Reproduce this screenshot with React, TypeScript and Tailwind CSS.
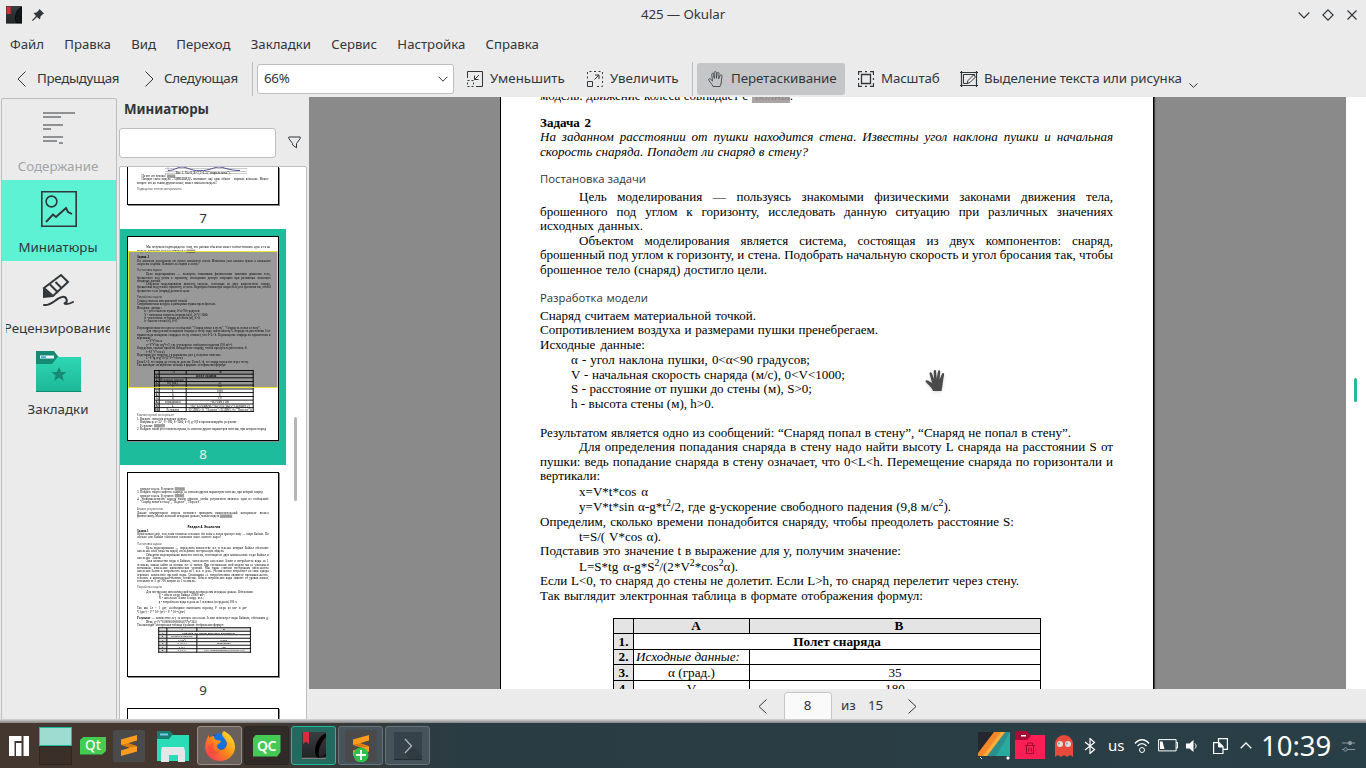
import type { ReactNode } from "react";

type Row = { b: number; x?: number; r?: number; t: ReactNode; c?: string };

const SANS = "font-['Noto_Sans',sans-serif]";
const PAGE_SCALE = 0.2327;

/* One typeset line: b = baseline, x..r = horizontal extent inside the sheet. */
function Lines({ rows, start = 0 }: { rows: Row[]; start?: number }) {
  return (
    <>
      {rows.map((row, i) => {
        const prev = i === 0 ? start : rows[i - 1].b + 3;
        const x = row.x ?? 39;
        return (
          <div
            key={i}
            className={`h-[14px] whitespace-nowrap text-[13.05px] leading-[14px] ${row.r ? "[text-align-last:justify]" : ""} ${row.c ?? ""}`}
            style={{ marginTop: row.b - 11 - prev, marginLeft: x, width: row.r ? row.r - x : undefined }}
          >
            {row.t}
          </div>
        );
      })}
    </>
  );
}

const Blank = ({ children }: { children: ReactNode }) => (
  <span className="bg-[#aaa5a5] text-[#8b8686]">{children}</span>
);
const HEAD = "font-['Open_Sans',sans-serif] text-[11.3px]! text-[#333]";

const page8: Row[] = [
  { b: 50, x: 78, r: 612, t: "Мы получили подтверждение тому, что разным объектам может соответствовать одна и та же" },
  { b: 67, r: 292, t: <>модель: движение колеса совпадает с <Blank>&nbsp;волны</Blank>.</> },
  { b: 94, r: 90, t: "Задача 2", c: "font-bold" },
  { b: 108, r: 612, t: "На заданном расстоянии от пушки находится стена. Известны угол наклона пушки и начальная", c: "italic" },
  { b: 123, r: 307, t: "скорость снаряда. Попадет ли снаряд в стену?", c: "italic" },
  { b: 150, r: 144, t: "Постановка задачи", c: HEAD },
  { b: 168, x: 78, r: 612, t: "Цель моделирования — пользуясь знакомыми физическими законами движения тела," },
  { b: 183, r: 612, t: "брошенного под углом к горизонту, исследовать данную ситуацию при различных значениях" },
  { b: 197, r: 142, t: "исходных данных." },
  { b: 212, x: 78, r: 612, t: "Объектом моделирования является система, состоящая из двух компонентов: снаряд," },
  { b: 226, r: 612, t: "брошенный под углом к горизонту, и стена. Подобрать начальную скорость и угол бросания так, чтобы", c: "tracking-[-0.03px]" },
  { b: 241, r: 266, t: "брошенное тело (снаряд) достигло цели." },
  { b: 269, r: 147, t: "Разработка модели", c: HEAD },
  { b: 287, r: 255, t: "Снаряд считаем материальной точкой." },
  { b: 301, r: 377, t: "Сопротивлением воздуха и размерами пушки пренебрегаем." },
  { b: 316, r: 144, t: "Исходные данные:" },
  { b: 331, x: 70, r: 309, t: "α - угол наклона пушки, 0<α<90 градусов;" },
  { b: 346, x: 70, r: 344, t: "V - начальная скорость снаряда (м/с), 0<V<1000;" },
  { b: 360, x: 70, r: 311, t: "S - расстояние от пушки до стены (м), S>0;" },
  { b: 375, x: 70, r: 213, t: "h - высота стены (м), h>0." },
  { b: 404, r: 570, t: "Результатом является одно из сообщений: “Снаряд попал в стену”, “Снаряд не попал в стену”." },
  { b: 418, x: 78, r: 612, t: "Для определения попадания снаряда в стену надо найти высоту L снаряда на расстоянии S от" },
  { b: 433, r: 612, t: "пушки: ведь попадание снаряда в стену означает, что 0<L<h. Перемещение снаряда по горизонтали и" },
  { b: 447, r: 99, t: "вертикали:" },
  { b: 463, x: 78, r: 147, t: "x=V*t*cos α" },
  { b: 478, x: 78, r: 450, t: <>y=V*t*sin α-g*t<sup>2</sup>/2, где g-ускорение свободного падения (9,8 м/с<sup>2</sup>).</> },
  { b: 493, r: 513, t: "Определим, сколько времени понадобится снаряду, чтобы преодолеть расстояние S:" },
  { b: 508, x: 78, r: 160, t: "t=S/( V*cos α)." },
  { b: 522, r: 400, t: "Подставив это значение t в выражение для y, получим значение:" },
  { b: 538, x: 78, r: 237, t: <>L=S*tg α-g*S<sup>2</sup>/(2*V<sup>2</sup>*cos<sup>2</sup>α).</> },
  { b: 552, r: 518, t: "Если L<0, то снаряд до стены не долетит. Если L>h, то снаряд перелетит через стену." },
  { b: 567, r: 422, t: "Так выглядит электронная таблица в формате отображения формул:" },
];

const page8tail: Row[] = [
  { b: 788, r: 183, t: "Компьютерный эксперимент", c: HEAD },
  { b: 805, r: 240, t: "1. Введите значения исходных данных" },
  { b: 819, x: 52, r: 462, t: "Например: α=35°, V=180, S=1000, h=8, g=9,8 и проанализируйте результат" },
  { b: 834, x: 52, r: 150, t: <>Результат: <Blank>попал!!!</Blank></> },
  { b: 849, r: 580, t: "2. Найдите такой угол наклона пушки, не изменяя других параметров системы, при котором снаряд" },
];

const table8: [string, string, string][] = [
  ["2.", "Исходные данные:", ""],
  ["3.", "α (град.)", "35"],
  ["4.", "V", "180"],
  ["5.", "S", "1000"],
  ["6.", "h", "8"],
  ["7.", "g", "9,8"],
  ["8.", "α (радианы)", "=B3*ПИ()/180"],
  ["9.", "L", "=B5*TAN(B8)-B7*B5^2/(2*B4^2*COS(B8)^2)"],
  ["10.", "Результат", "=ЕСЛИ(L<0; “Недолет”; ЕСЛИ(L>h; “Перелет”))"],
];

const page9: Row[] = [
  { b: 73, x: 52, r: 203, t: <>попадет в цель. Результат: <Blank>35 град.</Blank></> },
  { b: 87, r: 560, t: "3. Найдите такую скорость снаряда, не изменяя других параметров системы, при которой снаряд" },
  { b: 102, x: 52, r: 203, t: <>попадет в цель. Результат: <Blank>180 м/с</Blank></> },
  { b: 116, r: 604, t: "4. Усовершенствуйте модель таким образом, чтобы результатом являлось одно из сообщений:" },
  { b: 130, x: 52, r: 312, t: "“Снаряд попал в стену”, “Недолет”, “Перелет”." },
  { b: 157, r: 148, t: "Анализ результатов", c: HEAD },
  { b: 176, r: 604, t: "Данная компьютерная модель позволяет проводить вычислительный эксперимент взамен" },
  { b: 190, r: 440, t: <>физическому. Меняя значения исходных данных, можно видеть <Blank>результат</Blank></> },
  { b: 236, x: 256, r: 392, t: "Раздел 4. Экология", c: "font-bold font-['Open_Sans',sans-serif] text-[14px]!" },
  { b: 252, r: 87, t: "Задача 1", c: "font-bold" },
  { b: 266, r: 604, t: "Представим себе, что люди планеты остались без воды и пьют пресную воду — озера Байкал. На", c: "italic" },
  { b: 281, r: 400, t: "сколько лет Байкал обеспечит население всего земного шара?", c: "italic" },
  { b: 308, r: 144, t: "Постановка задачи", c: HEAD },
  { b: 326, x: 78, r: 604, t: "Цель моделирования — определить количество лет, в течение которых Байкал обеспечит" },
  { b: 340, r: 414, t: "население всей планеты водой, исследовать построенную модель." },
  { b: 355, x: 78, r: 604, t: "Объектом моделирования является система, состоящая из двух компонентов: озеро Байкал и" },
  { b: 369, r: 142, t: "население Земли." },
  { b: 384, x: 78, r: 604, t: "Зная количество воды в Байкале, численность населения Земли и потребность воды на 1" },
  { b: 398, r: 604, t: "человека, можно найти на сколько лет её хватит. При составлении этой модели мы не учитываем" },
  { b: 412, r: 604, t: "возможные изменения климатических условий. Мы также считаем постоянным численность" },
  { b: 427, r: 604, t: "населения Земли и потребность воды на 1 чел. в день. (Человечество потребляет на свои нужды" },
  { b: 441, r: 604, t: "огромное количество пресной воды. Основными её потребителями являются промышленность," },
  { b: 456, r: 604, t: "сельское и коммунально-бытовое хозяйство. Объем потребления воды зависит от уровня жизни," },
  { b: 470, r: 290, t: "составляя от 3 до 700 литров на 1 человека." },
  { b: 496, r: 147, t: "Разработка модели", c: HEAD },
  { b: 514, x: 78, r: 535, t: "Для построения математической модели определим исходные данные. Обозначим:" },
  { b: 528, x: 132, r: 330, t: "V - объем озера Байкал 23000 км³;" },
  { b: 543, x: 132, r: 325, t: "N - население Земли 6 млрд. чел.;" },
  { b: 557, x: 132, r: 470, t: "p - потребление воды в день на 1 человека (в среднем) 300 л." },
  { b: 586, r: 510, t: "Так как 1л = 1 дм³, необходимо выполнить перевод V озера из км³ в дм³" },
  { b: 600, r: 245, t: "V (дм³) = V * 10³ (м³) = V * 10¹² (дм³)" },
  { b: 629, r: 604, t: <><b>Результат</b> — количество лет, за которое население Земли использует воды Байкала, обозначим g.</> },
  { b: 643, x: 78, r: 290, t: "Итак, g=(V*1000000000000)/(N*p*365)" },
  { b: 656, r: 410, t: "Так выглядит электронная таблица в режиме отображения формул:" },
];

function Table8({ heavy }: { heavy: boolean }) {
  const cell = `${heavy ? "border-4" : "border"} border-black p-0 whitespace-nowrap overflow-hidden`;
  return (
    <table className="mt-[15px] ml-[112px] w-[428px] table-fixed border-collapse text-center text-[13.2px] leading-[12px]">
      <colgroup>
        <col className="w-[20px]" />
        <col className="w-[116px]" />
        <col />
      </colgroup>
      <tbody>
        <tr className="h-[15px] bg-[#e4e4e4] font-bold">
          <td className={cell} />
          <td className={cell}><span className="pl-[9px]">A</span></td>
          <td className={cell}><span className="pl-[8px]">B</span></td>
        </tr>
        <tr className="h-[16px] font-bold">
          <td className={`${cell} bg-[#e4e4e4]`}>1.</td>
          <td className={cell} colSpan={2}>Полет снаряда</td>
        </tr>
        {table8.map(([n, a, b], i) => (
          <tr key={n} className={i === 0 ? "h-[15px]" : i % 2 ? "h-[16px]" : "h-[17px]"}>
            <td className={`${cell} bg-[#e4e4e4] font-bold`}>{n}</td>
            <td className={`${cell} ${i === 0 ? "text-left italic" : ""}`}>{i === 0 ? <span className="pl-[2px]">{a}</span> : a}</td>
            <td className={cell}>{b}</td>
          </tr>
        ))}
      </tbody>
    </table>
  );
}

const sheet = "flow-root h-[901px] w-[652px] bg-white font-['Liberation_Serif',serif] text-black";

function Sheet8({ heavy = false }: { heavy?: boolean }) {
  return (
    <div className={sheet}>
      <Lines rows={page8} />
      <div className="h-[200px] overflow-hidden"><Table8 heavy={heavy} /></div>
      <Lines rows={page8tail} start={770} />
    </div>
  );
}

function Sheet9() {
  const rows = [["1.", "Сколько лет можно пить воду из Байкала", ""], ["2.", "Исходные данные:", ""], ["3.", "V (км³)", "23000"], ["4.", "N (чел.)", "6000000000"], ["5.", "p (л.)", "300"], ["6.", "g (лет)", "=(B3*1000000000000)/(B4*B5*365)"]];
  const cell = "border-4 border-black p-0 whitespace-nowrap overflow-hidden";
  return (
    <div className={sheet}>
      <Lines rows={page9} />
      <table className="mt-[4px] ml-[130px] w-[398px] table-fixed border-collapse text-center text-[12px] leading-[11px]">
        <colgroup><col className="w-[35px]" /><col className="w-[129px]" /><col /></colgroup>
        <tbody>
          <tr className="bg-[#e4e4e4] font-bold"><td className={cell} /><td className={cell}>A</td><td className={cell}>B</td></tr>
          {rows.map(([n, a, b], i) => (
            <tr key={n}>
              <td className={`${cell} bg-[#e4e4e4] font-bold`}>{n}</td>
              {i === 0 ? <td className={`${cell} font-bold`} colSpan={2}>{a}</td> : <><td className={`${cell} ${i === 1 ? "italic" : ""}`}>{a}</td><td className={cell}>{b}</td></>}
            </tr>
          ))}
        </tbody>
      </table>
    </div>
  );
}

function Mini({ sy = PAGE_SCALE, children }: { sy?: number; children: ReactNode }) {
  return (
    <div className="h-[205px] w-[152px] shrink-0 overflow-hidden border border-black bg-white shadow-[1px_1px_0_#8a8a8a]">
      <div className="origin-top-left" style={{ transform: `scale(${PAGE_SCALE}, ${sy})`, width: 653 }}>{children}</div>
    </div>
  );
}

function Thumbnails() {
  return (
    <div className="flex h-[555px] w-[188px] overflow-hidden rounded-[2px] border border-[#bcbebf] bg-white">
      <div className={`flex w-[166px] flex-col text-[13.33px] text-[#31363b] ${SANS}`}>
        <div className="flex h-[62px] shrink-0 flex-col items-center">
          <div className="h-[38px] w-[152px] overflow-hidden border border-t-0 border-black shadow-[1px_1px_0_#8a8a8a]">
            <svg width="150" height="7" className="block">
              <path d="M37 1.5h82M37 4.5h82M37 6.5h82M40 0v7" stroke="#b5b5b5" strokeWidth=".7" fill="none" />
              <path d="M40 3.5c7 0 9-3.5 14-3.5s8 3.7 18 3.7S86 0 91 0s9 3.5 21 3.5" stroke="#4c4a8f" fill="none" />
            </svg>
            <div className="w-[653px] origin-top-left font-['Liberation_Serif',serif] text-black" style={{ transform: `scale(${PAGE_SCALE})` }}>
              <Lines
                start={0}
                rows={[
                  { b: 8, x: 205, r: 440, t: "Рис. 1. Vк=0, R=1, l=1.5 (“спираль козы”)." },
                  { b: 24, x: 58, r: 200, t: <>На что это похоже? <Blank>волны</Blank></> },
                  { b: 37, x: 58, r: 604, t: "Находит связь модель – ЦИКЛОИДА описывает ещё один объект – морское волнение. Может" },
                  { b: 51, r: 375, t: "вопрос: что же таким другим может, может заменить модель?" },
                  { b: 80, r: 230, t: "Подведение итогов эксперимента", c: HEAD },
                ]}
              />
            </div>
          </div>
          <div className="mt-[4px] leading-[18px]">7</div>
        </div>
        <div className="flex h-[236px] shrink-0 flex-col items-center bg-[#1dbc9c] pt-[7px] text-[#eff0f1]">
          <div className="relative">
            <Mini sy={0.2275}><Sheet8 heavy /></Mini>
            <div className="absolute top-[15px] left-[1px] h-[137px] w-[150px] border border-[#e9e92a] bg-black/40" />
          </div>
          <div className="mt-[4px] leading-[18px]">8</div>
        </div>
        <div className="flex h-[236px] shrink-0 flex-col items-center pt-[7px]">
          <Mini><Sheet9 /></Mini>
          <div className="mt-[4px] leading-[18px]">9</div>
        </div>
        <div className="flex shrink-0 flex-col items-center pt-[7px]"><Mini>{null}</Mini></div>
      </div>
      <div className="mt-[250px] ml-[8px] h-[84px] w-[3px] rounded-full bg-[#b4b5b6]" />
    </div>
  );
}

function SideItem({ label, icon, cls = "" }: { label: string; icon: ReactNode; cls?: string }) {
  return (
    <div className={`flex h-[81px] flex-col items-center overflow-hidden pr-[6px] pl-[4px] ${cls}`}>
      <div className="flex h-[58px] shrink-0 items-center pl-[2px]">{icon}</div>
      <div className="flex w-[104px] justify-center overflow-hidden leading-[18px] whitespace-nowrap">{label}</div>
    </div>
  );
}

function Sidebar() {
  return (
    <div className="ml-px h-[624px] w-[116px] rounded-[2px] border border-[#bcbebf] text-[13.33px]">
      <SideItem
        label="Содержание"
        cls="text-[#a2a4a5]"
        icon={<svg width="32" height="34" className="-mt-[3px]" fill="#909192"><path d="M0 2h32v2H0zM0 6h18v2H0zM0 14h20v2H0zM0 18h8v2H0zM0 26h20v2H0zM0 30h14v2H0zM16 32h4v2h-4z" /></svg>}
      />
      <SideItem
        label="Миниатюры"
        cls="bg-[#5ef2d5]"
        icon={<svg width="36" height="36" fill="none" stroke="#31363b" strokeWidth="1.6"><path d="M.8.8h34.4v34.4H.8z" /><circle cx="10.5" cy="10.5" r="5.4" /><path d="M5 31l7-7.5 3 2.5 5-4.500 5-4.500 2 4 4 2" strokeWidth="1.9" /></svg>}
      />
      <SideItem
        label="Рецензирование"
        icon={<svg width="34" height="34" fill="none" stroke="#31363b" strokeWidth="2"><path d="M2 15L19 2l7 7L11 23z" /><path d="M8 11.500l8 8M13.500 9l6 6" /><path d="M1 25V15l10 9z" fill="#31363b" stroke="none" /><path d="M2 32c8 1 12-7 18-8 5-1 6 5 3 6-2 1 3 2 8-1" strokeLinecap="round" /></svg>}
      />
      <SideItem
        label="Закладки"
        icon={
          <svg width="46" height="44" className="mt-[2px]">
            <defs><linearGradient id="fold" x2="0" y2="1"><stop stopColor="#30dcb8" /><stop offset="1" stopColor="#1db797" /></linearGradient></defs>
            <path d="M0 2h18l5 5h22v35H0z" fill="url(#fold)" />
            <path d="M0 1h18l4 5.500-6 7.500H0z" fill="#168a73" />
            <path d="M4 5.500h14v3H4z" fill="#f2f9ff" /><path d="M5 6.200h5v1.800H5z" fill="#3daee9" />
            <path d="M0 41.500h45.500" stroke="#138a70" />
            <path d="M23 17l2.200 5h5.300l-4.200 3.500 1.600 5.500-4.900-3.200L18.100 31l1.600-5.500L15.500 22h5.300z" fill="#168a73" />
          </svg>
        }
      />
    </div>
  );
}

const I = ({ w = 16, h = 16, cls = "", children }: { w?: number; h?: number; cls?: string; children: ReactNode }) => (
  <svg width={w} height={h} viewBox={`0 0 ${w} ${h}`} className={`shrink-0 ${cls}`} fill="none" stroke="#31363b">{children}</svg>
);

function Toolbar() {
  return (
    <div className="flex h-[36px] items-center pb-[1px] text-[13.33px] whitespace-nowrap">
      <I w={9} h={16} cls="ml-[17px]"><path d="M8.500.5L1 8l7.500 7.500" /></I>
      <span className="ml-[11px] w-[108px] tracking-[-0.3px]">Предыдущая</span>
      <I w={9} h={16} cls="-ml-[0px]"><path d="M.5.5L8 8 .5 15.500" /></I>
      <span className="ml-[10px] w-[88px] tracking-[-0.25px]">Следующая</span>
      <div className="mt-[1px] h-[34px] w-px bg-[#bcbebf]" />
      <div className="mt-[1px] ml-[4px] flex h-[30px] w-[197px] items-center justify-between rounded-[3px] border border-[#bcbebf] bg-white pr-[5px] pl-[6px]">
        <span className="tracking-[-0.3px]">66%</span>
        <I w={10} h={6}><path d="M.5.7L5 5.200 9.500.7" /></I>
      </div>
      <I cls="ml-[13px]"><path d="M.5 7V.5h15v15H9M12 4L7.500 8.500M7.500 4.500v4h4" /><path d="M.5 9.500h6v6h-6z" strokeDasharray="2 2" /></I>
      <span className="ml-[7px] w-[97px]">Уменьшить</span>
      <I><path d="M.5 7.500V.5h15v15H9" strokeDasharray="2 2.500" /><path d="M.5 10.500h5v5h-5zM7.500 8.500L12 4M8 4h4v4" /></I>
      <span className="ml-[7px] w-[82px]">Увеличить</span>
      <div className="mt-[1px] h-[34px] w-px bg-[#bcbebf]" />
      <div className="ml-[4px] flex h-[32px] w-[148px] items-center rounded-[3px] bg-[#c4c6c7]">
        <I cls="ml-[11px]">
          <path d="M5 15.500C4 12.500 1 10.500.6 8.600c0-1 1.200-1.100 1.900-.5L4.500 10 3.700 3.500c0-1.500 1.600-1.500 1.900-.2L6.300 7.500 6.200 1.700c.1-1.500 2-1.500 2.100 0l.2 5.600.6-5c.3-1.300 2-1.200 1.900.2l-.3 5.300 1.400-3.300c.7-1.200 2.200-.6 1.900.6L13 13l-1 2.500z" strokeWidth=".8" />
        </I>
        <span className="ml-[7px] tracking-[-0.08px]">Перетаскивание</span>
      </div>
      <I cls="ml-[13px]"><path d="M.5 4V.5H4M12 .5h3.500V4M15.500 12v3.500H12M4 15.500H.5V12M7 .5h2M7 15.500h2M.5 7v2M15.500 7v2M3.500 3.500h9v9h-9z" strokeWidth="1.300" /></I>
      <span className="ml-[7px] w-[79px] tracking-[-0.15px]">Масштаб</span>
      <I w={18} h={16}><path d="M1.500 0v16M16.500 0v16M0 1.500h18M0 14.500h18" strokeWidth="1.200" /><path d="M7 12.500H3.500v-9h11V5M7 12.500l1-3 5.500-5.500 2 2L10 11.500z" /></I>
      <span className="ml-[6px] tracking-[-0.1px]">Выделение текста или рисунка</span>
      <I w={9} h={5} cls="mt-[14px] ml-[7px]"><path d="M.5.5L4.500 4.300 8.500.5" /></I>
    </div>
  );
}

function Sublime({ plus = false }: { plus?: boolean }) {
  return (
    <svg width="32" height="32" viewBox="0 0 32 32">
      <rect width="32" height="32" rx="2" fill="#4a4a4a" />
      <path d="M8 9.500L24 5v5.500l-9 2.700 9 3v5.300L8 26v-5.500l9-2.700-9-3z" fill="#ff9b1f" />
      <path d="M8 14.800l7-1.600 9 3-7 1.600z" fill="#d97b0d" />
      {plus && <><circle cx="16" cy="25" r="7.500" fill="#2bc24a" /><path d="M16 20v10M11 25h10" stroke="#fff" strokeWidth="1.800" /></>}
    </svg>
  );
}

const OkularIcon = ({ w, h, solid = false }: { w: number; h: number; solid?: boolean }) => (
  <svg width={w} height={h} viewBox="0 0 24 27" preserveAspectRatio="none">
    <defs><linearGradient id="ok" x2="0" y2="1"><stop stopColor="#3b3e40" /><stop offset="1" stopColor="#202425" /></linearGradient></defs>
    <path d="M0 0h24v27H0z" fill="url(#ok)" />
    <path d="M0 26.300h24" stroke="#9a9a9a" />
    {solid
      ? <path d="M24 2c-8 2-12 13-8.500 23H24z" fill="#15181a" stroke="#000" />
      : <path d="M24 1.500C17 3 12.500 14 13 20c.5 5 3 6.500 5.500 5.500L24 22v1.500L18.500 26C15 24 16 13 24 5z" fill="#000" />}
    <path d={solid ? "M1 1h6v11H1z" : "M1 0h6v12L4 9.500 1 12z"} fill="#da2a3c" />
  </svg>
);

const btn = "flex h-[39px] w-[45px] items-center justify-center rounded-[3px] border";

function Taskbar() {
  return (
    <div className={`flex h-[45px] items-center bg-linear-to-r from-[#43372f] from-16% via-[#2a3c43] via-34% to-[#293f47] text-white ${SANS}`}>
      <svg width="20" height="20" className="ml-[9px]" fill="#fff"><path d="M0 0h12.500v5H5.500v15H0zM7 7h5.500v13H7zM14.500 0H20v20h-5.500z" /></svg>
      <div className="ml-[10px] w-[33px]">
        <div className="h-[19px] border border-[#1dbc9c] bg-[#9edcd1]" />
        <div className="h-[19px] border border-[#30261f] bg-[#3a2f29]" />
      </div>
      <div className="ml-[8px] flex h-[18px] w-[26px] items-center justify-center bg-[#41cd52] text-[13.5px] font-medium leading-none [clip-path:polygon(15%_0,100%_0,100%_80%,85%_100%,0_100%,0_20%)]">Qt</div>
      <div className="ml-[7px]"><Sublime /></div>
      <svg width="32" height="32" className="ml-[12px]">
        <path d="M0 1h12l4 4h16v26H0z" fill="#2adcb7" /><path d="M0 1h13l3 3-4 5H0z" fill="#177f70" /><path d="M3 3.500h8v2H3z" fill="#7ccbef" />
        <path d="M5 17h22l1 4v11h-7v-7H12v7H4V21z" fill="#e5e6e8" />
      </svg>
      <div className={`${btn} ml-[8px] border-[#96908c] bg-[#69605b]`}>
        <svg width="32" height="32" viewBox="0 0 32 32">
          <defs><linearGradient id="ff" x1="1" y1="0" x2="0" y2="1"><stop stopColor="#fff036" /><stop offset=".5" stopColor="#ff8a16" /><stop offset="1" stopColor="#f2246a" /></linearGradient></defs>
          <circle cx="15" cy="15" r="11" fill="#1c3fb5" />
          <path d="M11 5c4-3 9-1 11 4 2 6-2 12-8 10s-6-9-3-14z" fill="#1273e0" />
          <path d="M20 1c8 4 11 11 11 16 0 8-7 14-15 14S1 25 1 17C1 12 3 8 5 5v3c1-1 3-2 5-2 0 2 1 4 3 4l4 1c0 2-4 3-4 5 0 4 5 5 8 2 3-3 2-7-1-10-2-3-3-5 0-7z" fill="url(#ff)" />
          <path d="M10 13c-2 4 0 9 6 9-4 4-11 2-12-3-1-3 3-6 6-6z" fill="#f0443a" opacity=".5" />
        </svg>
      </div>
      <div className={`${btn} ml-[2px] border-[#2b2520] bg-[#302b29]`}>
        <div className="flex h-[22px] w-[28px] items-center justify-center bg-[#43c954] text-[14px] font-semibold leading-none tracking-[-0.5px] [clip-path:polygon(12%_0,100%_0,100%_80%,88%_100%,0_100%,0_20%)]">QC</div>
      </div>
      <div className={`${btn} ml-[2px] border-[#1dbc9c] bg-[#25685e]`}><OkularIcon w={24} h={27} /></div>
      <div className={`${btn} ml-[2px] border-[#65737a] bg-[#46535a]`}><Sublime plus /></div>
      <div className={`${btn} ml-[2px] border-[#65737a] bg-[#46535a]`}>
        <svg width="28" height="28"><path d="M0 0h28v28H0z" fill="#36424a" /><path d="M18 14l10 10v4H16l-5-7z" fill="#2f3a41" /><path d="M0 27.500h28" stroke="#222b30" /><path d="M11 7l6.500 7-6.500 7" stroke="#b0b6b9" fill="none" strokeWidth="1.300" /></svg>
      </div>
      <svg width="32" height="28" className="ml-auto shrink-0">
        <path d="M0 0h32v24H0z" fill="#2b8f8d" /><path d="M32 0v24H18z" fill="#28aa9f" /><path d="M0 0h17L0 22z" fill="#24272d" /><path d="M16 0h11L9 24H0v-3z" fill="#f5892a" /><path d="M23 0h4L9 24H5z" fill="#ffad3b" />
        <path d="M2 25l2 2M29 25h2v2h-2z" stroke="#fff" fill="#fff" />
      </svg>
      <svg width="30" height="28" className="mb-[2px] ml-[5px] shrink-0">
        <path d="M0 1h12l3 3h15v24H0z" fill="#fa1e55" /><path d="M0 0h12l4 5-4 4H0z" fill="#a60c36" /><path d="M6 4h5v1.500H6z" fill="#fff" />
        <path d="M10 14.500h10M12.500 14v-2h5v2M11.500 15v7.500h7V15M13.800 17v3.500M16.300 17v3.500" stroke="#9c0d33" fill="none" />
      </svg>
      <svg width="20" height="24" className="ml-[9px] shrink-0">
        <path d="M1 23V10a9 9 0 0 1 18 0v13l-3-2-3 2-3-2-3 2-3-2z" fill="#e64b3c" /><circle cx="6" cy="10" r="3" fill="#dedede" /><circle cx="14" cy="10" r="3" fill="#dedede" /><circle cx="5" cy="9.500" r="1" fill="#999" /><circle cx="13" cy="9.500" r="1" fill="#999" />
      </svg>
      <svg width="12" height="16" className="ml-[10px] shrink-0" fill="none" stroke="#fff"><path d="M1 4l9.500 7.500L6 15.500V.5l4.500 4L1 12" strokeWidth="1.200" /></svg>
      <span className="ml-[12px] w-[17px] text-[15px] leading-none">us</span>
      <svg width="16" height="16" className="mt-[1px] ml-[9px] shrink-0" fill="none" stroke="#fff"><path d="M1 5.500c4-5 10-5 14 0" strokeWidth="1.300" /><path d="M3.500 8.200c2.500-3.500 6.500-3.500 9 0" strokeWidth="1.300" /><circle cx="8" cy="12" r="2.500" /></svg>
      <svg width="20" height="13" className="ml-[8px] shrink-0" fill="none" stroke="#fff"><path d="M.6.6h17.500v11.300H.6zM18 3.500h1.500V9H18" /><path d="M2 2.500h2.500l2 7.500H2z" fill="#fff" stroke="none" /></svg>
      <svg width="12" height="14" className="ml-[8px] shrink-0" fill="#fff"><path d="M0 4.500h3.500L7.500 1v12L3.500 9.500H0z" /><path d="M9 4.500c1.500 1.500 1.500 3.500 0 5" fill="none" stroke="#fff" /></svg>
      <svg width="15" height="16" className="ml-[15px] shrink-0" fill="none" stroke="#fff"><path d="M5.500 4V.6h8.900v10.800H10" strokeWidth="1.200" /><path d="M.6 4.600h5.400l4 3.900v7H.6z" strokeWidth="1.200" /><path d="M5.500 4.600v4.400H10z" fill="#fff" /></svg>
      <svg width="12" height="7" className="ml-[12px] shrink-0" fill="none" stroke="#fff" strokeWidth="1.300"><path d="M.7 6.200L6 1l5.300 5.200" /></svg>
      <span className="ml-[9px] w-[72px] text-[27.500px] leading-none">10:39</span>
      <svg width="13" height="12" className="mr-[11px] ml-[9px] shrink-0" fill="#8b989c" stroke="#8b989c"><path d="M0 3h13M0 9.500h13" /><circle cx="8" cy="3" r="1.700" /><circle cx="3.500" cy="9.500" r="1.700" fill="#293f47" /></svg>
    </div>
  );
}

export default function App() {
  return (
    <div className={`flex h-[768px] w-[1366px] flex-col overflow-hidden bg-[#ebebeb] text-[#31363b] ${SANS}`}>
      <header className="flex h-[29px] shrink-0 items-center text-[13.33px]">
        <div className="ml-[6px]"><OkularIcon w={16} h={18} solid /></div>
        <svg width="12" height="12" viewBox="0 0 12 12" className="ml-[10px]" fill="#31363b"><path d="M7.500 0L12 4.500l-1.300.7L8.500 7.500 8 10.500 5 8 .8 12 0 11.200 4 7 1.500 4l3-.5L6.800 1.300z" /></svg>
        <div className="flex-1 pl-[24px] text-center tracking-[-0.1px]">425 — Okular</div>
        <I w={12} h={12} cls="mr-[12px]"><path d="M.7 3.500L6 8.800l5.300-5.300" strokeWidth="1.200" /></I>
        <I w={12} h={12} cls="mr-[12px]"><path d="M6 .9L11.100 6 6 11.100.9 6z" strokeWidth="1.200" /></I>
        <I w={12} h={12} cls="mr-[8px]"><path d="M1.500 1.500l9 9M10.500 1.500l-9 9" strokeWidth="1.200" /></I>
      </header>
      <nav className="flex h-[32px] shrink-0 items-center gap-[20.3px] pl-[10px] text-[13.2px]">
        {["Файл", "Правка", "Вид", "Переход", "Закладки", "Сервис", "Настройка", "Справка"].map((m) => <span key={m}>{m}</span>)}
      </nav>
      <Toolbar />
      <main className="flex h-[624px] shrink-0">
        <div className="h-[622px] pt-px"><Sidebar /></div>
        <div className="ml-[2px] w-[190px]">
          <div className="h-[31px] pl-[5px] text-[13.33px] leading-[24px] font-bold">Миниатюры</div>
          <div className="flex h-[38px] items-start">
            <input className="h-[30px] w-[157px] rounded-[3px] border border-[#bcbebf] bg-white" aria-label="Поиск" />
            <I w={13} h={13} cls="mt-[8px] ml-[12px]"><path d="M.8 1h11.400v1.500L8.500 7.500v4.300L4.600 9V7.500L.8 2.500z" /></I>
          </div>
          <Thumbnails />
        </div>
        <div className="flex flex-1 flex-col">
          <div className="flex h-[592px]">
            <div className="relative h-[592px] w-[1037px] overflow-hidden bg-[#8a8a8a]">
              <div className="-mt-[65px] ml-[191px] w-[654px] border border-black shadow-[1px_1px_1px_#444]"><Sheet8 /></div>
              <svg className="absolute top-[272px] left-[615px] drop-shadow" width="24" height="24" viewBox="0 0 24 24" fill="#4a4a4a">
                <path d="M9 22C8 18 3 15 1.500 12.500c0-1.500 1.800-1.500 3-.7L8 14 5.500 4.500c0-1.700 2-1.700 2.400-.2L10 10 9.700 2.300c.1-1.700 2.200-1.700 2.400 0l.6 7.400 1.300-7.500c.4-1.500 2.400-1.200 2.200.4l-.6 7.800 2.300-5.500c.6-1.400 2.500-.8 2.200.7L18.700 14c-.2 3-.8 5.500-1.200 8z" />
              </svg>
            </div>
            <div className="flex-1 bg-white"><div className="mt-[281px] ml-[8px] h-[24px] w-[3px] rounded-full bg-[#1dbc9c]" /></div>
          </div>
          <div className="flex h-[32px] items-center pt-[2px] pl-[449px] text-[13.33px]">
            <I w={9} h={15}><path d="M8.500.5L1 7.500l7.500 7" /></I>
            <div className="ml-[17px] flex h-[29px] w-[48px] items-center justify-center rounded-[3px] border border-[#c4c6c7] bg-[#fafafa] pr-[1px]">8</div>
            <span className="ml-[9px] w-[27px]">из</span>
            <span>15</span>
            <I w={9} h={15} cls="ml-[25px]"><path d="M.5.500L8 7.500l-7.500 7" /></I>
          </div>
        </div>
      </main>
      <div className="relative -mt-[2px] h-[4px] shrink-0 bg-linear-to-b from-[#d8d8d8] to-[#858585]" />
      <Taskbar />
    </div>
  );
}
